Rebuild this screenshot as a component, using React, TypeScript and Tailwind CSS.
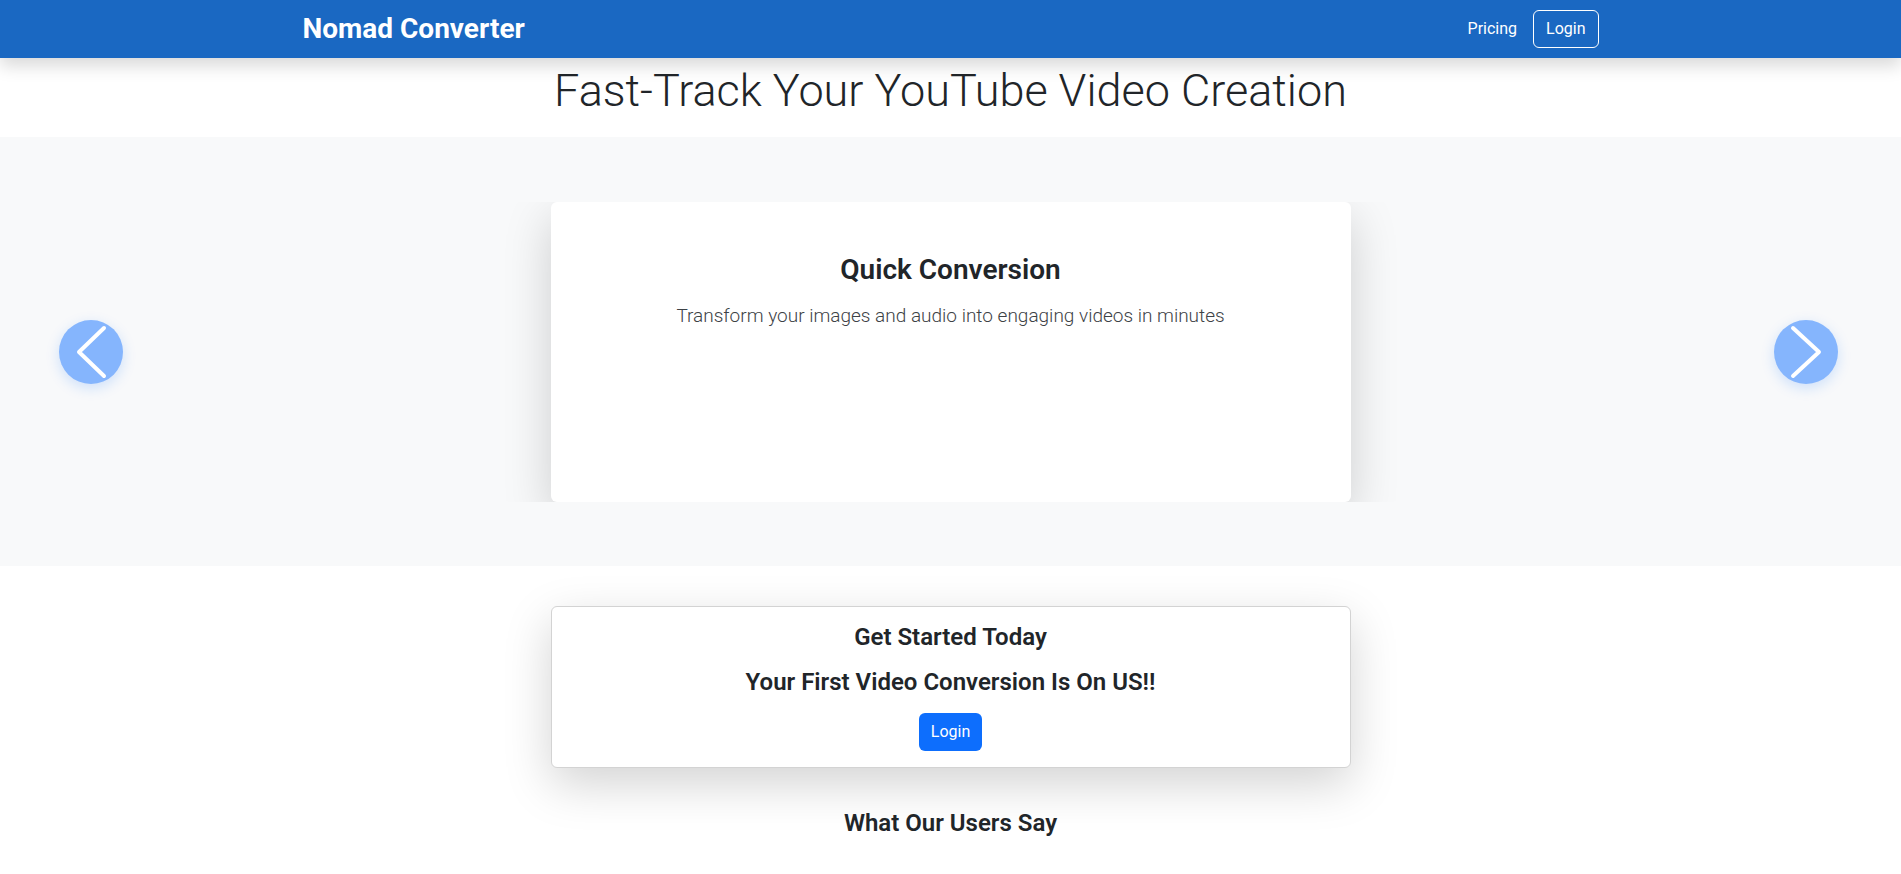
import { useState } from 'react'

const slides = [
  {
    title: 'Quick Conversion',
    text: 'Transform your images and audio into engaging videos in minutes',
  },
]

function Chevron({ dir }: { dir: 'left' | 'right' }) {
  return (
    <svg width="64" height="64" viewBox="0 0 64 64" fill="none">
      {dir === 'left' ? (
        <path d="M45 8 L20 32 L45 56" stroke="white" strokeWidth="4" strokeLinecap="round" strokeLinejoin="round" />
      ) : (
        <path d="M19 8 L45 32 L19 56" stroke="white" strokeWidth="4" strokeLinecap="round" strokeLinejoin="round" />
      )}
    </svg>
  )
}

function Navbar() {
  return (
    <nav className="relative z-10 h-[58px] bg-[#1a68c2] shadow-[0_8px_16px_rgba(0,0,0,0.15)]">
      <div className="mx-auto flex h-full max-w-[1320px] items-center justify-between px-3">
        <span className="text-[28px] font-bold text-white">Nomad Converter</span>
        <div className="flex items-center">
          <a className="px-2 text-base text-white">Pricing</a>
          <button className="ml-[8px] h-[38px] rounded-md border border-white px-3 text-base text-white">
            Login
          </button>
        </div>
      </div>
    </nav>
  )
}

function Carousel() {
  const [index, setIndex] = useState(0)
  const slide = slides[index]
  const go = (d: number) => setIndex((i) => (i + d + slides.length) % slides.length)

  return (
    <section className="relative bg-[#f8f9fa] pt-[65px] pb-[64px]">
      <div className="mx-auto w-[900px] overflow-hidden">
        <div className="mx-auto flex h-[300px] w-[800px] flex-col items-center rounded-md bg-white px-12 pt-[51px] text-center shadow-[0_16px_48px_rgba(0,0,0,0.175)]">
          <h3 className="mb-[15px] text-[28px] leading-[1.2] font-semibold text-[#212529]">{slide.title}</h3>
          <p className="text-[19px] leading-[1.5] font-light text-[#3d4246]">{slide.text}</p>
        </div>
      </div>

      {/* carousel controls sit over the slide area */}
      <button
        onClick={() => go(-1)}
        className="absolute top-[183px] left-[59px] flex h-16 w-16 items-center justify-center rounded-full bg-[#85b5fd] shadow-[0_4px_14px_rgba(13,110,253,0.18)]"
      >
        <Chevron dir="left" />
      </button>
      <button
        onClick={() => go(1)}
        className="absolute top-[183px] right-[63px] flex h-16 w-16 items-center justify-center rounded-full bg-[#85b5fd] shadow-[0_4px_14px_rgba(13,110,253,0.18)]"
      >
        <Chevron dir="right" />
      </button>
    </section>
  )
}

export default function App() {
  return (
    <div className="min-h-screen bg-white font-['Segoe_UI','Roboto',sans-serif] text-[#212529]">
      <Navbar />

      <h1 className="mt-[6px] mb-[19px] text-center text-[45px] leading-[1.2] font-light">
        Fast-Track Your YouTube Video Creation
      </h1>

      <Carousel />

      <main className="flex flex-col items-center">
        <div className="mt-10 w-[800px] rounded-md border border-[#d3d3d3] bg-white p-4 text-center shadow-[0_16px_48px_rgba(0,0,0,0.175)]">
          <h4 className="mb-4 text-2xl leading-[1.2] font-semibold">Get Started Today</h4>
          <h4 className="mb-4 text-2xl leading-[1.2] font-semibold">Your First Video Conversion Is On US!!</h4>
          <button className="h-[38px] rounded-md bg-[#0d6efd] px-3 text-base text-white">Login</button>
        </div>

        <h5 className="mt-[41px] text-2xl leading-[1.2] font-semibold">What Our Users Say</h5>
      </main>
    </div>
  )
}
